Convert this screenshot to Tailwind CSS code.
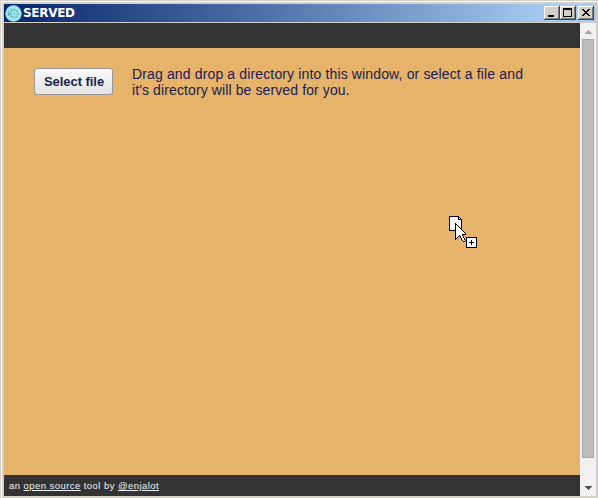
<!DOCTYPE html>
<html lang="en">
<head>
<meta charset="utf-8">
<title>SERVED</title>
<script src="https://cdn.jsdelivr.net/npm/@tailwindcss/browser@4"></script>
</head>
<body class="w-[598px] h-[498px] overflow-hidden bg-[#d4d0c8] font-['Liberation_Sans',Arial,sans-serif]">
<div class="relative flex flex-col w-[598px] h-[498px] pt-[3px] pl-[3px] pr-[2px] pb-[2px] bg-[#d4d0c8] shadow-[inset_1px_1px_0_#d4d0c8,inset_2px_2px_0_#fff]">
  <header class="flex items-center h-[18px] shrink-0 ml-px mt-px mb-px pl-px pr-[2px] bg-linear-to-r from-[#0a246a] to-[#a6caf0] to-[92%]">
    <svg class="size-[17px] shrink-0" viewBox="0 0 17 17">
      <circle cx="8.5" cy="8.5" r="8.2" fill="#9be4ea"/>
      <circle cx="9" cy="8.5" r="3.8" fill="none" stroke="#5ba5b4" stroke-width="1.2" stroke-dasharray="1.5 1"/>
      <path d="M3.5 6v5M4.5 8.5l2-2M4.5 8.5l2 2.5M8 8.5h2" fill="none" stroke="#5ba5b4" stroke-width=".8"/>
    </svg>
    <h1 class="ml-px text-white font-bold text-[12px] leading-[17px] tracking-[-0.3px] whitespace-nowrap font-['DejaVu_Sans',Verdana,sans-serif]">SERVED</h1>
    <div class="ml-auto flex">
      <button aria-label="Minimize" class="w-4 h-[14px]"><svg class="block" width="16" height="14" shape-rendering="crispEdges"><path fill="#404040" d="M0 0h16v14H0z"/><path fill="#fff" d="M0 0h15v13H0z"/><path fill="#808080" d="M1 1h14v12H1z"/><path fill="#d4d0c8" d="M1 1h13v11H1z"/><path fill="#000" d="M4 9h6v2H4z"/></svg></button>
      <button aria-label="Maximize" class="w-4 h-[14px]"><svg class="block" width="16" height="14" shape-rendering="crispEdges"><path fill="#404040" d="M0 0h16v14H0z"/><path fill="#fff" d="M0 0h15v13H0z"/><path fill="#808080" d="M1 1h14v12H1z"/><path fill="#d4d0c8" d="M1 1h13v11H1z"/><path fill="#000" d="M3 2h9v9H3z"/><path fill="#d4d0c8" d="M4 4h7v6H4z"/></svg></button>
      <button aria-label="Close" class="ml-[2px] w-4 h-[14px]"><svg class="block" width="16" height="14" shape-rendering="crispEdges"><path fill="#404040" d="M0 0h16v14H0z"/><path fill="#fff" d="M0 0h15v13H0z"/><path fill="#808080" d="M1 1h14v12H1z"/><path fill="#d4d0c8" d="M1 1h13v11H1z"/><path fill="#000" d="M4 3h2v1H4zM10 3h2v1h-2zM5 4h2v1H5zM9 4h2v1H9zM6 5h4v1H6zM7 6h2v1H7zM6 7h4v1H6zM5 8h2v1H5zM9 8h2v1H9zM4 9h2v1H4zM10 9h2v1h-2z"/></svg></button>
    </div>
  </header>
  <div class="flex flex-1 ml-px">
    <main class="flex flex-col w-[576px]">
      <div class="h-[25px] bg-[#333]"></div>
      <section class="flex-1 flex items-start bg-[#e6b36a] pl-[30px] pt-5 text-[#1c1c4e]">
        <button class="w-[79px] h-[27px] pl-px rounded-[3px] border border-[#999] bg-linear-to-b from-[#f9f9f9] to-[#e3e3e3] text-[13px] leading-[25px] tracking-[-0.05px] font-bold text-[#1c1c4e] whitespace-nowrap">Select file</button>
        <p class="ml-[19px] -mt-[2px] text-[14px] leading-4 tracking-[0.14px] whitespace-nowrap">Drag and drop a directory into this window, or select a file and<br><span class="tracking-[0.11px]">it's directory will be served for you.</span></p>
      </section>
      <footer class="h-[21px] bg-[#333] pl-[5px] text-[9.5px] leading-[21px] tracking-[0.44px] text-[#f4f4f4] whitespace-nowrap">an <a class="underline">open source</a> tool by <a class="underline">@enjalot</a></footer>
    </main>
    <aside class="flex flex-col items-center flex-1 bg-[#f0f0f0]">
      <svg class="shrink-0" width="16" height="16" shape-rendering="crispEdges"><path fill="#a3a3a3" d="M8 7h1v1H8zM7 8h3v1H7zM6 9h5v1H6zM5 10h7v1H5z"/></svg>
      <div class="w-[12px] h-[419px] bg-[#bcbcbc] border border-[#a8a8a8]"></div>
      <svg class="mt-auto shrink-0" width="16" height="18" shape-rendering="crispEdges"><path fill="#505050" d="M5 8h7v1H5zM6 9h5v1H6zM7 10h3v1H7zM8 11h1v1H8z"/></svg>
    </aside>
  </div>
  <svg class="absolute left-[449px] top-[216px]" width="29" height="33" shape-rendering="crispEdges">
    <path fill="#000" d="M0 0h10v1h1v1h1v1h1v12H0z"/><path fill="#fff" d="M1 1h8v3h3v10H1z"/><path fill="#fff" d="M10 2h1v1h-1z"/>
    <g transform="translate(6 7)">
      <path fill="#000" d="M0 0h1v1h1v1h1v1h1v1h1v1h1v1h1v1h1v1h1v1h1v1h1v2H8v1h1v2h1v2h1v1h-1v1H8v-1H7v-1H6v-2H5v-2H4v1H3v1H2v1H1v1H0z"/>
      <path fill="#fff" d="M1 2h1v1h1v1h1v1h1v1h1v1h1v1h1v1h1v1h1v1H7v2h1v2h1v2h1v1H8v-1H7v-2H6v-2H5v-1H4v1H3v1H2v1H1z"/>
    </g>
    <path fill="#000" d="M17 21h11v11H17z"/><path fill="#fff" d="M18 22h9v9h-9z"/><path fill="#000" d="M22 24h1v5h-1zM20 26h5v1h-5z"/>
  </svg>
</div>
</body>
</html>
